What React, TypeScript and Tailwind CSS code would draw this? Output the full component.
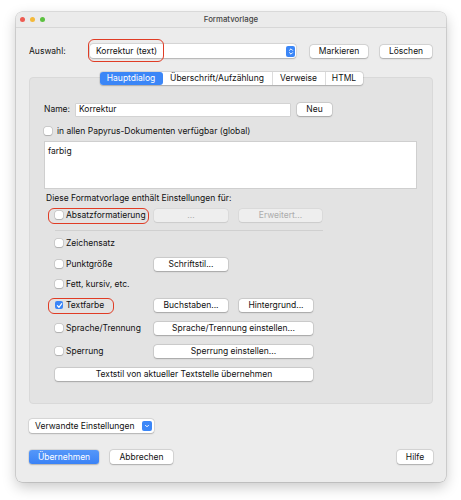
import type { ReactNode } from 'react';

const BTN =
  'flex items-center justify-center rounded-[3px] bg-white text-[#111] shadow-[0_0_0_0.5px_rgba(0,0,0,0.14),0_0.5px_1.5px_rgba(0,0,0,0.22)]';
const BTN_OFF =
  'flex items-center justify-center rounded-[3px] bg-[#eeeeee] text-[#acacac] shadow-[0_0_0_0.5px_rgba(0,0,0,0.06),0_0.5px_1px_rgba(0,0,0,0.08)]';

function Button({ children, className = '', disabled = false }: { children: ReactNode; className?: string; disabled?: boolean }) {
  return <div className={`${disabled ? BTN_OFF : BTN} h-[13px] ${className}`}>{children}</div>;
}

function Check({ checked = false }: { checked?: boolean }) {
  if (checked) {
    return (
      <span className="flex h-[8px] w-[8px] shrink-0 items-center justify-center rounded-[2px] bg-[#3b86f7]">
        <svg width="7" height="7" viewBox="0 0 10 10" fill="none">
          <path d="M2 5.3 L4.2 7.6 L8.2 2.4" stroke="white" strokeWidth="1.7" strokeLinecap="round" strokeLinejoin="round" />
        </svg>
      </span>
    );
  }
  return (
    <span className="h-[8px] w-[8px] shrink-0 rounded-[2px] bg-white shadow-[0_0_0_0.5px_rgba(0,0,0,0.18),0_0.5px_1px_rgba(0,0,0,0.15)]" />
  );
}

function Ring({ className }: { className: string }) {
  return <span className={`pointer-events-none absolute rounded-[6px] border-[1.8px] border-[#e03c25] ${className}`} />;
}

function OptionRow({
  label,
  checked = false,
  ring = '',
  className = '',
  children,
}: {
  label: string;
  checked?: boolean;
  ring?: string;
  className?: string;
  children?: ReactNode;
}) {
  return (
    <div className={`flex h-[13px] items-center ${className}`}>
      <div className="relative flex w-[99px] items-center gap-[3px]">
        <Check checked={checked} />
        <span>{label}</span>
        {ring && <Ring className={ring} />}
      </div>
      <div className="flex gap-[11px]">{children}</div>
    </div>
  );
}

const TABS = [
  { label: 'Hauptdialog', w: 'w-[63px]', active: true },
  { label: 'Überschrift/Aufzählung', w: 'w-[109px]', active: false },
  { label: 'Verweise', w: 'w-[53px]', active: false },
  { label: 'HTML', w: 'w-[38px]', active: false },
];

export default function App() {
  return (
    <div className="h-[500px] w-[461px] bg-white pl-[16px] pt-[12px] font-['Inter','Liberation_Sans',sans-serif] text-[8.5px] leading-none text-[#111]">
      <div className="flex h-[470px] w-[430px] flex-col overflow-hidden rounded-[6px] bg-[#ececec] shadow-[0_0_0_0.5px_rgba(0,0,0,0.22),0_5px_14px_rgba(0,0,0,0.22)]">
        {/* title bar */}
        <div className="flex h-[16px] shrink-0 items-center border-b border-[#d7d7d7] bg-[#ebebeb] px-[4px]">
          <div className="flex w-[40px] gap-[5px]">
            <span className="h-[5px] w-[5px] rounded-full bg-[#ee5b51]" />
            <span className="h-[5px] w-[5px] rounded-full bg-[#f4b93a]" />
            <span className="h-[5px] w-[5px] rounded-full bg-[#5cc140]" />
          </div>
          <div className="flex-1 pr-[40px] text-center text-[7.8px] font-medium text-[#444]">Formatvorlage</div>
        </div>

        <div className="flex flex-1 flex-col px-[13px] pt-[16px]">
          {/* Auswahl row */}
          <div className="flex h-[14px] items-center">
            <span className="w-[61px]">Auswahl:</span>
            <div className="relative flex h-[14px] w-[206px] items-center rounded-[3px] bg-white pl-[6px] shadow-[0_0_0_0.5px_rgba(0,0,0,0.12),0_0.5px_1.5px_rgba(0,0,0,0.2)]">
              <span>Korrektur (text)</span>
              <span className="ml-auto mr-[1px] flex h-[11px] w-[9px] items-center justify-center rounded-[2px] bg-[#3b86f7]">
                <svg width="6" height="9" viewBox="0 0 6 9" fill="none">
                  <path d="M1.5 3.3 L3 1.8 L4.5 3.3 M1.5 5.7 L3 7.2 L4.5 5.7" stroke="white" strokeWidth="1" strokeLinecap="round" strokeLinejoin="round" />
                </svg>
              </span>
              <Ring className="-left-[2px] -top-[5px] h-[23px] w-[76px]" />
            </div>
            <Button className="ml-[14px] w-[58px]">Markieren</Button>
            <Button className="ml-[12px] w-[52px]">Löschen</Button>
          </div>

          {/* tabs */}
          <div className="relative z-10 mt-[14px] flex justify-center">
            <div className="flex h-[13px] rounded-[3px] bg-white shadow-[0_0_0_0.5px_rgba(0,0,0,0.12),0_0.5px_1.5px_rgba(0,0,0,0.2)]">
              {TABS.map((t, i) => (
                <div
                  key={t.label}
                  className={`flex items-center justify-center ${t.w} ${
                    t.active ? 'rounded-[3px] bg-[#3b86f7] text-white' : 'text-[#111]'
                  } ${i > 1 ? 'border-l border-[#dcdcdc]' : ''}`}
                >
                  {t.label}
                </div>
              ))}
            </div>
          </div>

          {/* panel */}
          <div className="-mt-[8px] flex h-[327px] flex-col rounded-[4px] border border-[#d9d9d9] bg-[#e3e3e3] px-[14px] pt-[25px]">
            <div className="flex h-[13px] items-center">
              <span className="w-[32px]">Name:</span>
              <div className="flex h-[12px] w-[214px] items-center bg-white pl-[3px] shadow-[0_0_0_0.5px_rgba(0,0,0,0.14)]">Korrektur</div>
              <Button className="ml-[7px] w-[35px]">Neu</Button>
            </div>

            <div className="mt-[11px] flex h-[8px] items-center gap-[5px]">
              <Check />
              <span>in allen Papyrus-Dokumenten verfügbar (global)</span>
            </div>

            <div className="mt-[6px] h-[48px] w-[373px] border border-[#cfcfcf] bg-white px-[3px] pt-[5px]">farbig</div>

            <div className="mt-[5px] pl-[2px]">Diese Formatvorlage enthält Einstellungen für:</div>

            <div className="pl-[11px]">
              <OptionRow label="Absatzformatierung" ring="-left-[7px] -top-[3px] h-[16px] w-[101px]" className="mt-[6px]">
                <Button disabled className="w-[74px]">...</Button>
                <Button disabled className="w-[83px]">Erweitert...</Button>
              </OptionRow>

              <div className="mt-[8px] h-px w-[268px] bg-[#d0d0d0]" />

              <OptionRow label="Zeichensatz" className="mt-[6px]" />
              <OptionRow label="Punktgröße" className="mt-[8px]">
                <Button className="w-[74px]">Schriftstil...</Button>
              </OptionRow>
              <OptionRow label="Fett, kursiv, etc." className="mt-[7px]" />
              <OptionRow label="Textfarbe" checked ring="-left-[7px] -top-[3px] h-[16px] w-[66px]" className="mt-[8px]">
                <Button className="w-[74px]">Buchstaben...</Button>
                <Button className="w-[74px]">Hintergrund...</Button>
              </OptionRow>
              <OptionRow label="Sprache/Trennung" className="mt-[10px]">
                <Button className="w-[159px]">Sprache/Trennung einstellen...</Button>
              </OptionRow>
              <OptionRow label="Sperrung" className="mt-[10px]">
                <Button className="w-[159px]">Sperrung einstellen...</Button>
              </OptionRow>
              <Button className="mt-[10px] w-[258px]">Textstil von aktueller Textstelle übernehmen</Button>
            </div>
          </div>

          {/* Verwandte Einstellungen */}
          <div className="mt-[15px] flex h-[14px] w-[125px] items-center rounded-[3px] bg-white pl-[6px] shadow-[0_0_0_0.5px_rgba(0,0,0,0.12),0_0.5px_1.5px_rgba(0,0,0,0.2)]">
            <span>Verwandte Einstellungen</span>
            <span className="ml-auto mr-[2px] flex h-[10px] w-[10px] items-center justify-center rounded-[2px] bg-[#3b86f7]">
              <svg width="6" height="6" viewBox="0 0 6 6" fill="none">
                <path d="M1.5 2.3 L3 3.8 L4.5 2.3" stroke="white" strokeWidth="1" strokeLinecap="round" strokeLinejoin="round" />
              </svg>
            </span>
          </div>

          {/* bottom buttons */}
          <div className="mt-[17px] flex items-center">
            <div className="flex h-[14px] w-[70px] items-center justify-center rounded-[3px] bg-gradient-to-b from-[#5597f9] to-[#3a82f6] text-white shadow-[0_0_0_0.5px_rgba(0,0,0,0.1),0_0.5px_1.5px_rgba(0,0,0,0.2)]">
              Übernehmen
            </div>
            <Button className="ml-[11px] h-[14px] w-[63px]">Abbrechen</Button>
            <Button className="ml-auto h-[14px] w-[36px]">Hilfe</Button>
          </div>
        </div>
      </div>
    </div>
  );
}
